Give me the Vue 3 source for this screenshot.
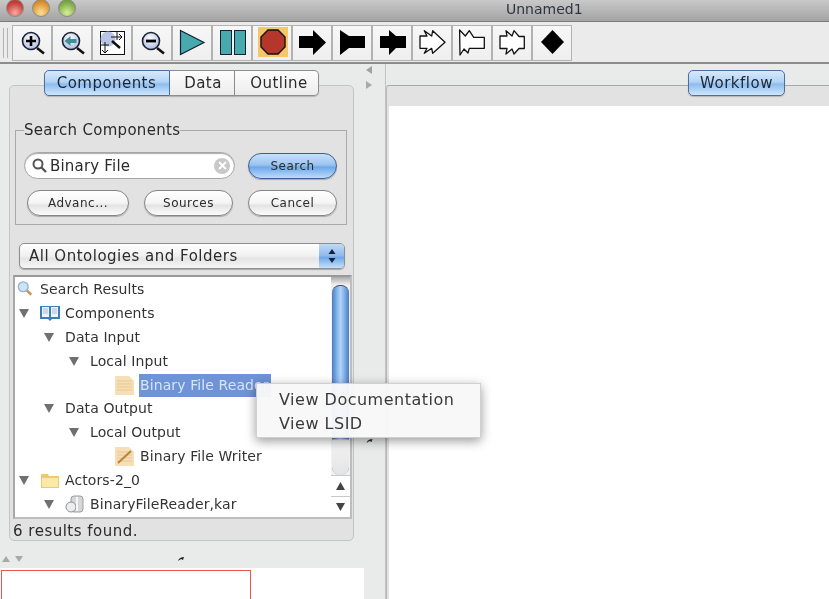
<script setup>
const treeRows = [
  { text: 'Search Results', indent: 'i0', icon: 'search', arrow: false },
  { text: 'Components', indent: 'i0', icon: 'book', arrow: true },
  { text: 'Data Input', indent: 'i1', icon: '', arrow: true },
  { text: 'Local Input', indent: 'i2', icon: '', arrow: true },
  { text: 'Binary File Reader', indent: 'i4', icon: 'doc', arrow: false, selected: true },
  { text: 'Data Output', indent: 'i1', icon: '', arrow: true },
  { text: 'Local Output', indent: 'i2', icon: '', arrow: true },
  { text: 'Binary File Writer', indent: 'i4', icon: 'pen', arrow: false },
  { text: 'Actors-2_0', indent: 'i0', icon: 'folder', arrow: true },
  { text: 'BinaryFileReader,kar', indent: 'i1', icon: 'jar', arrow: true }
]
const lenses = [
  { sign: 'plus' },
  { sign: 'back' }
]
</script>

<template>
  <div class="window">
    <header class="titlebar">
      <div class="lights">
        <span class="light red"></span>
        <span class="light amber"></span>
        <span class="light green"></span>
      </div>
      <span class="title">Unnamed1</span>
    </header>

    <div class="toolbar">
      <span class="grip"></span>
      <div class="tools">
        <button v-for="l in lenses" :key="l.sign" class="tool">
          <svg viewBox="0 0 38 34" width="38" height="34">
            <defs>
              <radialGradient :id="'g' + l.sign" cx="0.45" cy="0.35" r="0.7">
                <stop offset="0" stop-color="#ffffff" />
                <stop offset="1" stop-color="#a9b7dc" />
              </radialGradient>
            </defs>
            <line x1="24" y1="22" x2="31" y2="27.500" stroke="#111" stroke-width="2.600" />
            <circle cx="18" cy="15" r="8.500" :fill="'url(#g' + l.sign + ')'" stroke="#1c2233" stroke-width="1.600" />
            <path v-if="l.sign === 'plus'" d="M13 15h10M18 10v10" stroke="#000" stroke-width="2.600" />
            <path v-else d="M11.500 15l6-5v3h6v4h-6v3z" fill="#3f8f98" />
          </svg>
        </button>
        <button class="tool">
          <svg viewBox="0 0 38 34" width="38" height="34">
            <rect x="7.500" y="5.500" width="24" height="23" fill="#fff" stroke="#111" />
            <circle cx="15" cy="13" r="7.500" fill="#b9c5e4" />
            <path d="M19 15l8 7" stroke="#111" stroke-width="2.500" />
            <path d="M18 11h11M26 8l3 3-3 3M24 6v8M12 16v11M9 24l3 3 3-3M8 19h8" stroke="#111" fill="none" />
          </svg>
        </button>
        <button class="tool">
          <svg viewBox="0 0 38 34" width="38" height="34">
            <line x1="24" y1="22" x2="31" y2="27.500" stroke="#111" stroke-width="2.600" />
            <circle cx="18" cy="15" r="8.500" fill="url(#gplus)" stroke="#1c2233" stroke-width="1.600" />
            <path d="M13 15h10" stroke="#000" stroke-width="2.800" />
          </svg>
        </button>
        <button class="tool">
          <svg viewBox="0 0 38 34" width="38" height="34">
            <path d="M7.500 4.500L31 16.500 7.500 28.500z" fill="#48a9ae" stroke="#123" stroke-width="1.200" />
          </svg>
        </button>
        <button class="tool">
          <svg viewBox="0 0 38 34" width="38" height="34">
            <rect x="7.500" y="4.500" width="11" height="24" fill="#48a9ae" stroke="#123" />
            <rect x="21.500" y="4.500" width="11" height="24" fill="#48a9ae" stroke="#123" />
          </svg>
        </button>
        <button class="tool">
          <svg viewBox="0 0 38 34" width="38" height="34">
            <rect x="5" y="1" width="30" height="30" fill="#f6c667" />
            <path d="M15 4h10l7 7v10l-7 7H15l-7-7V11z" fill="#b5372c" stroke="#111" stroke-width="1.400" />
          </svg>
        </button>
        <button class="tool">
          <svg viewBox="0 0 38 34" width="38" height="34">
            <path d="M6 10h14V4l13 12.500L20 29v-7H6z" fill="#000" />
          </svg>
        </button>
        <button class="tool">
          <svg viewBox="0 0 38 34" width="38" height="34">
            <path d="M7 4l9 6h16v12H16L7 29z" fill="#000" />
          </svg>
        </button>
        <button class="tool">
          <svg viewBox="0 0 38 34" width="38" height="34">
            <path d="M7 10h9V4l7 6h10v12H23l-7 7v-7H7z" fill="#000" />
          </svg>
        </button>
        <button class="tool">
          <svg viewBox="0 0 38 34" width="38" height="34">
            <path d="M7 10h7L11.300 4.700 18.700 10 19.700 4.700 32 16.300 19.700 27.300 18.700 22.300 11.300 27.300 14 22.300H7z" fill="#fff" stroke="#111" stroke-width="1.300" stroke-linejoin="round" />
          </svg>
        </button>
        <button class="tool">
          <svg viewBox="0 0 38 34" width="38" height="34">
            <path d="M6.600 4L12.300 10 16.300 4.700 20.700 11.300H31.300V22.300H16.300L15 27 11 23 7 29z" fill="#fff" stroke="#111" stroke-width="1.300" stroke-linejoin="round" />
          </svg>
        </button>
        <button class="tool">
          <svg viewBox="0 0 38 34" width="38" height="34">
            <path d="M7 10h7L13 4.700 19 10 21 4.700 26 10.500H31.300V22.500H26L21 28 19 23 13 28 14 22.500H7z" fill="#fff" stroke="#111" stroke-width="1.300" stroke-linejoin="round" />
          </svg>
        </button>
        <button class="tool">
          <svg viewBox="0 0 38 34" width="38" height="34">
            <path d="M19.500 4L31 16 19.500 28 8 16z" fill="#000" />
          </svg>
        </button>
      </div>
    </div>

    <main class="workspace">
      <section class="left">
        <nav class="tabs">
          <span class="tab on first">Components</span>
          <span class="tab middle">Data</span>
          <span class="tab last">Outline</span>
        </nav>

        <div class="panel">
          <fieldset class="search">
            <legend>Search Components</legend>
            <div class="search-row">
              <div class="field">
                <svg width="17" height="17" viewBox="0 0 17 17">
                  <circle cx="7" cy="7" r="4.500" fill="none" stroke="#555" stroke-width="2" />
                  <line x1="10" y1="10" x2="15" y2="15" stroke="#555" stroke-width="2.400" />
                </svg>
                <span class="field-text">Binary File</span>
                <span class="clear">
                  <svg width="9" height="9" viewBox="0 0 9 9"><path d="M1 1l7 7M8 1l-7 7" stroke="#fff" stroke-width="1.800" /></svg>
                </span>
              </div>
              <span class="pill primary">Search</span>
            </div>
            <div class="button-row">
              <span class="pill advanced">Advanc...</span>
              <span class="pill">Sources</span>
              <span class="pill">Cancel</span>
            </div>
          </fieldset>

          <div class="select">
            <span>All Ontologies and Folders</span>
            <span class="select-arrows">
              <svg width="10" height="16" viewBox="0 0 10 16"><path d="M5 1l3.500 5h-7zM5 15l3.500-5h-7z" fill="#14223c" /></svg>
            </span>
          </div>

          <div class="tree">
            <div class="tree-rows">
              <div v-for="row in treeRows" :key="row.text" class="row" :class="row.indent">
                <span v-if="row.arrow" class="twisty"></span>
                <svg v-if="row.icon === 'search'" class="ic ic-search" width="16" height="17" viewBox="0 0 18 18">
                  <line x1="10" y1="10" x2="16" y2="16" stroke="#c9995c" stroke-width="3" />
                  <circle cx="7" cy="7" r="5.500" fill="#cfe3f7" stroke="#8fb2d6" stroke-width="1.500" />
                </svg>
                <svg v-if="row.icon === 'book'" class="ic ic-wide" width="20" height="17" viewBox="0 0 20 17">
                  <path d="M0 1h20v13h-8l-2 2-2-2H0z" fill="#3d7fb5" />
                  <path d="M2 2h7v10H2zM11 2h7v10h-7z" fill="#eef3f8" />
                  <path d="M3 4h5M3 6h5M3 8h5M12 4h5M12 6h5M12 8h5" stroke="#a8bdd0" />
                </svg>
                <svg v-if="row.icon === 'doc' || row.icon === 'pen'" class="ic ic-doc" width="19" height="19" viewBox="0 0 19 19">
                  <path d="M0 0h14l5 5v14H0z" fill="#f6dfb6" />
                  <path d="M2 5h15M2 8h15M2 11h15M2 14h15" stroke="#eac68f" />
                  <path v-if="row.icon === 'pen'" d="M3 16L16 4" stroke="#b5843f" stroke-width="2" />
                </svg>
                <svg v-if="row.icon === 'folder'" class="ic ic-folder" width="18" height="16" viewBox="0 0 18 16">
                  <path d="M0 2h7l1 2h10v12H0z" fill="#edc974" />
                  <path d="M1 6h16v9H1z" fill="#fae9a8" />
                </svg>
                <svg v-if="row.icon === 'jar'" class="ic ic-jar" width="19" height="18" viewBox="0 0 19 18">
                  <rect x="6" y="1" width="12" height="16" rx="3" fill="#d5d7d8" stroke="#9a9d9f" />
                  <circle cx="6" cy="12" r="5" fill="#eceded" stroke="#8f9294" />
                  <path d="M12 2v14" stroke="#f6f6f6" stroke-width="2" />
                </svg>
                <span class="label" :class="{ selected: row.selected }">{{ row.text }}</span>
              </div>
            </div>
            <div class="scrollbar">
              <span class="track-top"></span>
              <span class="thumb"></span>
              <span class="step">
                <svg width="9" height="8" viewBox="0 0 9 8"><path d="M4.500 0L9 8H0z" fill="#444" /></svg>
              </span>
              <span class="step">
                <svg width="9" height="8" viewBox="0 0 9 8"><path d="M4.500 8L9 0H0z" fill="#444" /></svg>
              </span>
            </div>
          </div>
          <div class="status">6 results found.</div>
        </div>

        <div class="lower-bar">
          <span class="tri-up"></span>
          <span class="tri-down"></span>
          <svg class="handle" width="6" height="6" viewBox="0 0 6 6"><path d="M0 5C1 2 3 1 6 1L5 4 3 3z" fill="#222" /></svg>
        </div>
        <div class="canvas">
          <div class="red-box"></div>
        </div>
      </section>

      <aside class="splitter">
        <span class="tri-left"></span>
        <span class="tri-right"></span>
      </aside>

      <section class="right">
        <nav class="tabs right-tabs">
          <span class="tab on solo">Workflow</span>
        </nav>
        <div class="right-panel">
          <div class="sheet"></div>
        </div>
      </section>
    </main>

    <div class="menu">
      <div>View Documentation</div>
      <div>View LSID</div>
    </div>
    <svg class="handle-2" width="7" height="6" viewBox="0 0 6 6"><path d="M0 5C1 2 3 1 6 1L5 4 3 3z" fill="#222" /></svg>
  </div>
</template>

<style>
html, body { margin: 0; background: #e9eaea; overflow: hidden; }
</style>

<style scoped>
.window {
  position: relative;
  width: 829px;
  height: 599px;
  overflow: hidden;
  background: #e9eaea;
  color: #2b2b2b;
  font-family: "DejaVu Sans", sans-serif;
  font-size: 14px;
  filter: blur(0.45px);
}
.titlebar {
  height: 22px;
  display: flex;
  align-items: flex-start;
  background: linear-gradient(#c9c9c9, #a3a3a3);
  border-bottom: 1px solid #7a7a7a;
  box-sizing: border-box;
}
.lights { display: flex; gap: 8px; padding-left: 6px; margin-top: -1px; }
.light { width: 18px; height: 18px; border-radius: 50%; border: 1px solid #8a8a8a; box-sizing: border-box; }
.red { background: radial-gradient(circle at 50% 80%, #f8aaa2, #c8403a 65%, #a83530); }
.amber { background: radial-gradient(circle at 50% 80%, #fbe096, #dc9435 65%, #b9782a); }
.green { background: radial-gradient(circle at 50% 80%, #d8ee9c, #80ad45 65%, #64903a); }
.title { position: absolute; left: 506px; top: 1px; color: #2e3440; font-size: 14px; }

.toolbar {
  height: 42px;
  display: flex;
  align-items: center;
  box-sizing: border-box;
  background: #ebebeb;
  border-bottom: 2px solid #8c8c8c;
  padding: 2px 0 0 3px;
}
.grip { width: 3px; height: 30px; border-left: 1px solid #b4b4b4; border-right: 1px solid #b4b4b4; margin-right: 5px; }
.tools { display: flex; gap: 2px; }
.tool {
  width: 38px;
  height: 34px;
  padding: 0;
  display: block;
  background: linear-gradient(#f7f7f7, #efefef);
  border: 0;
  outline: 1px solid #b2b2b2;
}
.tool svg { display: block; }

.workspace { display: flex; height: 535px; }
.left { width: 364px; display: flex; flex-direction: column; }
.tabs { display: flex; justify-content: center; position: relative; z-index: 2; }
.left > .tabs { width: 364px; margin: 6px 0 -11px; justify-content: flex-start; padding-left: 44px; box-sizing: border-box; }
.tab {
  height: 26px;
  box-sizing: border-box;
  line-height: 25px;
  text-align: center;
  background: linear-gradient(#fdfdfd, #ececec);
  border: 1px solid #8e8e8e;
  border-left: 0;
  box-shadow: 0 1px 1px rgba(0,0,0,.2);
  font-size: 15px;
  letter-spacing: .45px;
}
.tab.on {
  background: linear-gradient(#d7e9fb 0, #b3d4f6 45%, #8dbdf0 55%, #cfe6fc 100%);
  border-color: #4e6f9e;
  color: #1d2633;
}
.first { border-left: 1px solid #4e6f9e; border-radius: 5px 0 0 5px; width: 126px; padding-right: 1px; }
.middle { width: 65px; padding-left: 2px; }
.last { border-radius: 0 5px 5px 0; width: 84px; padding-left: 5px; }

.panel {
  margin-left: 9px;
  width: 345px;
  height: 456px;
  box-sizing: border-box;
  background: #e2e2e2;
  border: 1px solid #c4c4c4;
  border-radius: 5px;
  padding: 34px 5px 0 3px;
}
.search {
  margin: 0 0 0 2px;
  padding: 0 0 0 8px;
  width: 332px;
  height: 105px;
  box-sizing: border-box;
  border: 1px solid #a9a9a9;
  min-width: 0;
}
.search legend { padding: 0; line-height: 20px; font-size: 15px; letter-spacing: .3px; }
.search-row { display: flex; align-items: center; margin-top: 12px; }
.field {
  width: 211px;
  height: 27px;
  box-sizing: border-box;
  border: 1px solid #a6a6a6;
  border-radius: 14px;
  background: #fff;
  box-shadow: inset 0 1px 1px #aaa;
  display: flex;
  align-items: center;
  padding: 0 4px 0 6px;
}
.field-text { flex: 1; margin-left: 2px; font-size: 15px; letter-spacing: .2px; }
.clear {
  width: 16px; height: 16px; border-radius: 50%; background: #c8c8c8;
  display: flex; align-items: center; justify-content: center;
}
.pill {
  width: 89px;
  height: 26px;
  box-sizing: border-box;
  border: 1px solid #858585;
  border-radius: 13px;
  background: linear-gradient(#fff 0, #f4f4f4 50%, #e4e4e4 60%, #fbfbfb 100%);
  box-shadow: 0 1px 1px rgba(0,0,0,.25);
  display: flex;
  align-items: center;
  justify-content: center;
  font-size: 12px;
  letter-spacing: .5px;
}
.primary {
  margin-left: 13px;
  background: linear-gradient(#c9e0f8 0, #9cc4f0 45%, #6ea8ea 55%, #bcdcfb 100%);
  border-color: #3f5f92;
}
.button-row { display: flex; margin: 11px 0 0 3px; gap: 15px; }
.advanced { width: 102px; }
.select {
  margin: 18px 0 0 6px;
  width: 326px;
  height: 26px;
  box-sizing: border-box;
  border: 1px solid #8e8e8e;
  border-radius: 5px;
  background: linear-gradient(#fff, #f0f0f0 50%, #e4e4e4 60%, #f6f6f6);
  box-shadow: 0 1px 1px rgba(0,0,0,.25);
  display: flex;
  align-items: center;
  justify-content: space-between;
  padding-left: 9px;
  overflow: hidden;
  font-size: 15px;
  letter-spacing: .5px;
}
.select-arrows {
  width: 25px;
  height: 100%;
  display: flex;
  align-items: center;
  justify-content: center;
  background: linear-gradient(#c2daf6, #8db8ec 50%, #6ea6e6 55%, #c5e0fb);
}
.tree {
  margin: 6px 0 0 0;
  width: 339px;
  height: 244px;
  box-sizing: border-box;
  background: #fff;
  border: 2px solid #a8a8a8;
  border-top-color: #999;
  border-bottom-color: #bdbdbd;
  border-right-color: #bdbdbd;
  display: flex;
  justify-content: space-between;
}
.tree-rows { padding-top: 1px; flex: 1; overflow: visible; }
.row {
  height: 23.8px;
  display: flex;
  align-items: center;
  box-sizing: border-box;
  white-space: nowrap;
  letter-spacing: .1px;
  color: #333;
}
.i0 { padding-left: 4px; }
.i1 { padding-left: 29px; }
.i2 { padding-left: 54px; }
.i4 { padding-left: 100px; }
.twisty {
  width: 0; height: 0;
  margin-right: 11px;
  border-left: 5.500px solid transparent;
  border-right: 5.500px solid transparent;
  border-top: 9px solid #707070;
}
.ic { flex: none; }
.ic-search { margin-left: -2px; margin-right: 7px; margin-top: -2px; }
.ic-wide { margin-right: 5px; }
.ic-doc { margin-right: 6px; }
.ic-folder { margin-left: 1px; margin-right: 6px; }
.ic-jar { margin-right: 6px; }
.label { margin-left: -1px; padding: 2px 1px; line-height: 19px; }
.selected { background: #6e93d6; color: #d8e4f6; padding-right: 2px; }
.scrollbar {
  width: 19px;
  display: flex;
  flex-direction: column;
  background: #f1f1f1;
}
.track-top { height: 8px; background: linear-gradient(#aaa, #f1f1f1); }
.thumb {
  flex: 1;
  margin: 0 1px;
  border-radius: 8px;
  background:
    linear-gradient(#0000 0, #0000 153px, #f4f4f4 154px, #e4e4e4 100%),
    linear-gradient(90deg, #4a7cc0, #86b6ec 30%, #b2d3f6 50%, #86b6ec 70%, #4a7cc0);
  border-top: 1px solid #446;
}
.step {
  height: 21px;
  box-sizing: border-box;
  border-top: 1px solid #c9c9c9;
  background: #fff;
  display: flex;
  align-items: center;
  justify-content: center;
}
.status { padding: 2px 0 0 0; line-height: 20px; font-size: 15px; letter-spacing: .5px; }

.lower-bar { height: 27px; position: relative; flex: none; }
.tri-up, .tri-down {
  position: absolute; top: 15px; width: 0; height: 0;
  border-left: 4px solid transparent; border-right: 4px solid transparent;
}
.tri-up { left: 2px; border-bottom: 6px solid #a9a9a9; }
.tri-down { left: 15px; border-top: 6px solid #a9a9a9; }
.handle { position: absolute; left: 178px; top: 15px; }
.canvas {
  flex: 1;
  background: #fff;
  padding: 2px 0 0 1px;
}
.red-box { width: 250px; height: 60px; box-sizing: border-box; border: 1px solid #e8584d; }

.splitter { width: 22px; position: relative; border-right: 1px solid #c2c2c2; box-sizing: border-box; }
.tri-left, .tri-right {
  position: absolute; left: 2px; width: 0; height: 0;
  border-top: 4px solid transparent; border-bottom: 4px solid transparent;
}
.tri-left { top: 2px; border-right: 6px solid #a0a0a0; }
.tri-right { top: 17px; border-left: 6px solid #a9a9a9; }

.right { flex: 1; position: relative; }
.right-tabs { position: absolute; left: 302px; top: 6px; }
.solo { width: 97px; padding: 0; border-left: 1px solid #4e6f9e; border-radius: 5px; letter-spacing: .5px; }
.right-panel {
  margin-top: 21px;
  height: 514px;
  background: #e2e2e2;
  border-top: 1px solid #a9a9a9;
  border-left: 1px solid #b9b9b9;
  border-radius: 3px 0 0 0;
  padding: 20px 0 0 2px;
  box-sizing: border-box;
}
.sheet { background: #fff; height: 100%; }

.menu {
  position: absolute;
  left: 256px;
  top: 383px;
  width: 225px;
  height: 55px;
  box-sizing: border-box;
  padding: 4px 0 0 22px;
  background: rgba(248, 248, 248, .96);
  border: 1px solid #d0d0d0;
  box-shadow: 0 3px 10px rgba(0,0,0,.4);
  font-size: 16px;
  letter-spacing: .5px;
  line-height: 23.500px;
  color: #3a3a3a;
}
.handle-2 { position: absolute; left: 366px; top: 438px; }
</style>
